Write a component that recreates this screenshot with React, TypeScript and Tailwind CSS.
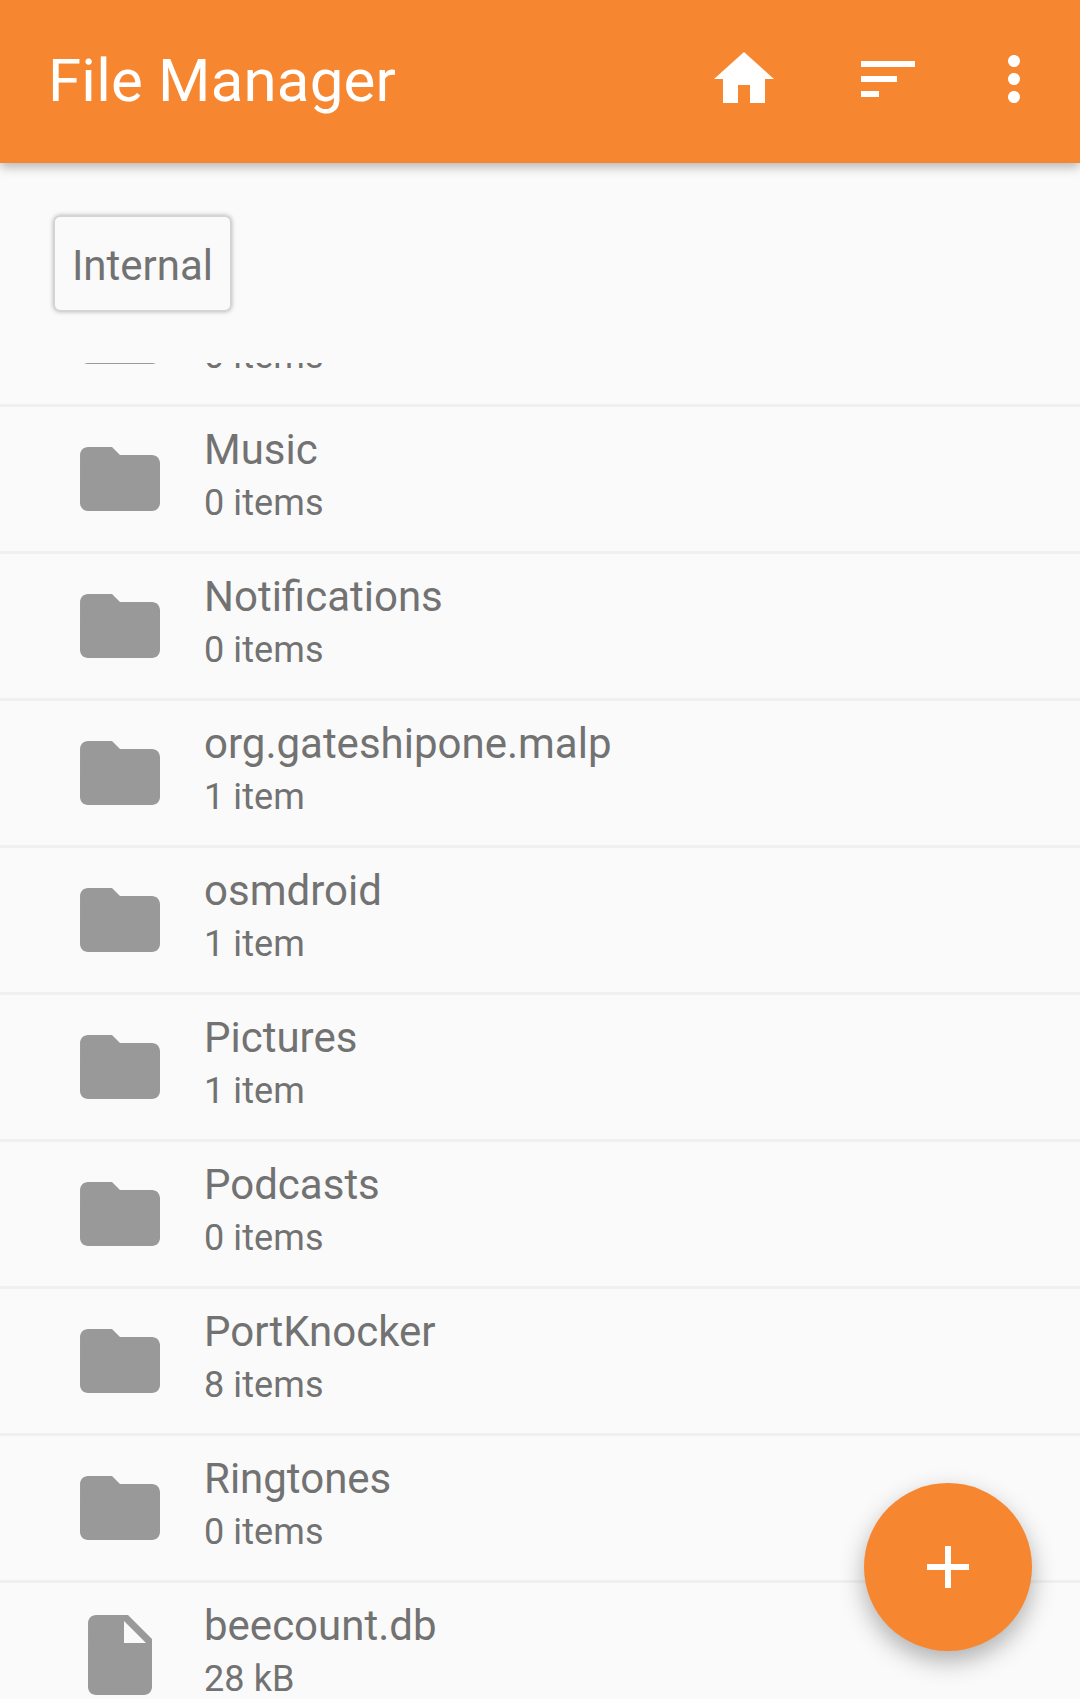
const folderPath = "M10 4H4c-1.1 0-1.99.9-1.99 2L2 18c0 1.1.9 2 2 2h16c1.1 0 2-.9 2-2V8c0-1.1-.9-2-2-2h-8l-2-2z";
const filePath = "M6 2c-1.1 0-1.99.9-1.99 2L4 20c0 1.1.89 2 1.99 2H18c1.1 0 2-.9 2-2V8l-6-6H6zm7 7V3.5L18.5 9H13z";

const ENTRIES = [
  { name: "Movies", detail: "0 items", icon: folderPath },
  { name: "Music", detail: "0 items", icon: folderPath },
  { name: "Notifications", detail: "0 items", icon: folderPath },
  { name: "org.gateshipone.malp", detail: "1 item", icon: folderPath },
  { name: "osmdroid", detail: "1 item", icon: folderPath },
  { name: "Pictures", detail: "1 item", icon: folderPath },
  { name: "Podcasts", detail: "0 items", icon: folderPath },
  { name: "PortKnocker", detail: "8 items", icon: folderPath },
  { name: "Ringtones", detail: "0 items", icon: folderPath },
  { name: "beecount.db", detail: "28 kB", icon: filePath },
];

const Icon = ({ d, className }: { d: string; className: string }) => (
  <svg viewBox="0 0 24 24" className={className} fill="currentColor">
    <path d={d} />
  </svg>
);

export default function App() {
  return (
    <div className="relative h-[1699px] w-[1080px] overflow-hidden bg-[#fafafa] font-['Roboto',sans-serif]">
      {/* Toolbar */}
      <header className="relative z-10 flex h-[163px] items-start bg-[#f78631] pl-[48px] pr-[30px] pt-[43px] text-white shadow-[0_4px_10px_rgba(0,0,0,0.28)]">
        <h1 className="mt-[2px] flex-1 text-[60px] font-normal leading-[72px] tracking-[0.2px]">File Manager</h1>
        <Icon className="h-[72px] w-[72px]" d="M10 20v-6h4v6h5v-8h3L12 3 2 12h3v8z" />
        <Icon className="ml-[72px] h-[72px] w-[72px]" d="M3 18h6v-2H3v2zM3 6v2h18V6H3zm0 7h12v-2H3v2z" />
        <Icon className="ml-[54px] h-[72px] w-[72px]" d="M12 8c1.1 0 2-.9 2-2s-.9-2-2-2-2 .9-2 2 .9 2 2 2zm0 2c-1.1 0-2 .9-2 2s.9 2 2 2 2-.9 2-2-.9-2-2-2zm0 6c-1.1 0-2 .9-2 2s.9 2 2 2 2-.9 2-2-.9-2-2-2z" />
      </header>

      {/* Storage chip */}
      <div className="flex h-[200px] items-start pl-[53px] pt-[52px]">
        <div className="flex h-[97px] w-[179px] items-center justify-center rounded-[7px] border-[2px] border-[#d4d4d4] pt-[4px] text-[42px] leading-none text-[#727272] shadow-[0_0_4px_rgba(0,0,0,0.25)]">
          Internal
        </div>
      </div>

      {/* File list */}
      <div className="h-[1336px] overflow-hidden">
        <ul className="-mt-[103px]">
          {ENTRIES.map((entry) => (
            <li key={entry.name} className="flex h-[147px] border-b-[3px] border-[#f0f0f0] pl-[72px]">
              <Icon className="mt-[24px] h-[96px] w-[96px] shrink-0 text-[#999999]" d={entry.icon} />
              <div className="ml-[36px] pt-[18px] text-[#727272]">
                <div className="text-[42px] leading-[50px]">{entry.name}</div>
                <div className="mt-[3px] text-[36px] leading-[50px] tracking-[0.1px]">{entry.detail}</div>
              </div>
            </li>
          ))}
        </ul>
      </div>

      {/* Add button */}
      <button className="absolute left-[864px] top-[1483px] flex h-[168px] w-[168px] items-center justify-center rounded-full bg-[#f78631] text-white shadow-[0_10px_24px_rgba(0,0,0,0.3)]">
        <Icon className="h-[72px] w-[72px]" d="M19 13h-6v6h-2v-6H5v-2h6V5h2v6h6v2z" />
      </button>
    </div>
  );
}
